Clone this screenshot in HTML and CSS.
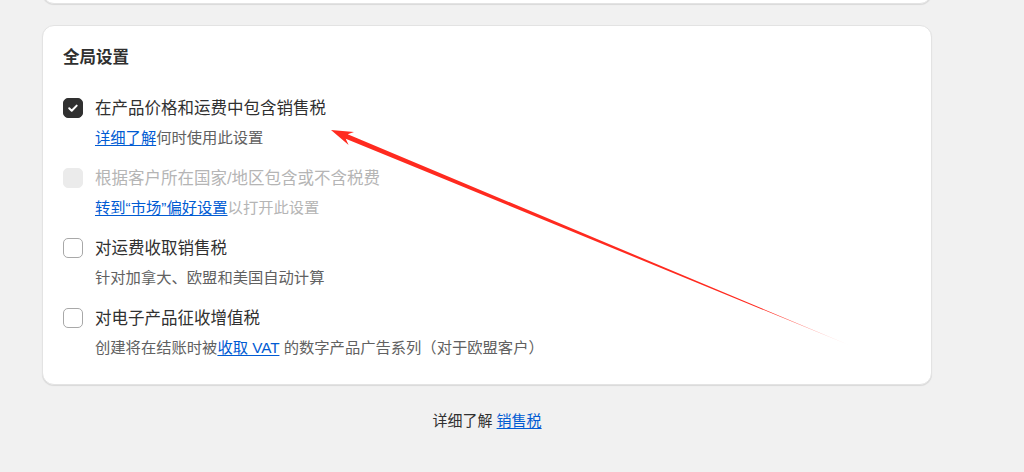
FILE: index.html
```html
<!DOCTYPE html>
<html lang="zh-CN">
<head>
<meta charset="utf-8">
<title>全局设置</title>
<link rel="stylesheet" href="styles.css">
</head>
<body>
<main class="page">
  <div class="card card-prev"></div>
  <section class="card">
    <h2 class="card-title">全局设置</h2>
    <div class="options">
      <div class="option">
        <span class="box checked">
          <svg viewBox="0 0 20 20" width="20" height="20"><path d="M6.2 10.3l2.5 2.5 5-5.2" fill="none" stroke="#fff" stroke-width="2" stroke-linecap="round" stroke-linejoin="round"/></svg>
        </span>
        <div class="opt-text">
          <div class="label">在产品价格和运费中包含销售税</div>
          <div class="desc"><a href="#" class="link">详细了解</a>何时使用此设置</div>
        </div>
      </div>
      <div class="option disabled">
        <span class="box disabled-box"></span>
        <div class="opt-text">
          <div class="label">根据客户所在国家/地区包含或不含税费</div>
          <div class="desc"><a href="#" class="link">转到“市场”偏好设置</a>以打开此设置</div>
        </div>
      </div>
      <div class="option">
        <span class="box"></span>
        <div class="opt-text">
          <div class="label">对运费收取销售税</div>
          <div class="desc">针对加拿大、欧盟和美国自动计算</div>
        </div>
      </div>
      <div class="option">
        <span class="box"></span>
        <div class="opt-text">
          <div class="label">对电子产品征收增值税</div>
          <div class="desc">创建将在结账时被<a href="#" class="link">收取 VAT</a> 的数字产品广告系列（对于欧盟客户）</div>
        </div>
      </div>
    </div>
  </section>
  <p class="footer">详细了解 <a href="#" class="link">销售税</a></p>
</main>
<svg class="arrow" width="1024" height="472" viewBox="0 0 1024 472">
  <defs>
    <linearGradient id="fade" x1="331" y1="130" x2="849" y2="345" gradientUnits="userSpaceOnUse">
      <stop offset="0" stop-color="#ff2a1f"/>
      <stop offset="0.85" stop-color="#ff2a1f"/>
      <stop offset="1" stop-color="#ff2a1f" stop-opacity="0.2"/>
    </linearGradient>
  </defs>
  <polygon points="331,130 354,132 347.7,134.2 849,345 345.7,138.8 348.6,144.9" fill="url(#fade)"/>
</svg>
</body>
</html>
```

FILE: styles.css
```css
* { box-sizing: border-box; }

html, body {
  margin: 0;
  padding: 0;
  background: #f1f1f1;
  font-family: "Liberation Sans", "Noto Sans CJK SC", sans-serif;
  color: #303030;
  overflow: hidden;
}

body {
  width: 1024px;
  height: 472px;
  position: relative;
}

.page {
  width: 890px;
  margin-left: 42px;
  display: flex;
  flex-direction: column;
}

.card {
  background: #fff;
  border: 1px solid #e3e3e3;
  border-radius: 12px;
  box-shadow: 0 1px 1px rgba(0, 0, 0, 0.1);
}

.card-prev {
  height: 24px;
  margin-top: -20px;
  margin-bottom: 21px;
}

section.card {
  height: 360px;
  padding: 19px 20px 20px;
}

.card-title {
  margin: 0;
  font-size: 16.5px;
  line-height: 24px;
  font-weight: 700;
  color: #303030;
}

.options {
  margin-top: 28px;
  display: flex;
  flex-direction: column;
  gap: 18px;
}

.option {
  display: flex;
  gap: 12px;
  align-items: flex-start;
}

.box {
  flex: none;
  width: 20px;
  height: 20px;
  margin-top: 1px;
  border-radius: 5px;
  border: 1px solid #a8a8a8;
  background: #fff;
  display: flex;
  align-items: center;
  justify-content: center;
}

.box.checked {
  background: #303030;
  border-color: #303030;
}

.box.checked svg { display: block; flex: none; }

.box.disabled-box {
  background: #ebebeb;
  border-color: #ebebeb;
}

.label {
  font-size: 16.5px;
  line-height: 22px;
  color: #303030;
}

.desc {
  margin-top: 8px;
  font-size: 15.3px;
  line-height: 22px;
  color: #616161;
}

.option.disabled .label,
.option.disabled .desc {
  color: #b5b5b5;
}

.link {
  color: #005bd3;
  text-decoration: underline;
  text-underline-offset: 2px;
}

.footer {
  margin: 25px 0 0;
  text-align: center;
  font-size: 15px;
  line-height: 22px;
  color: #303030;
}

.arrow {
  position: absolute;
  left: 0;
  top: 0;
  pointer-events: none;
}
```
